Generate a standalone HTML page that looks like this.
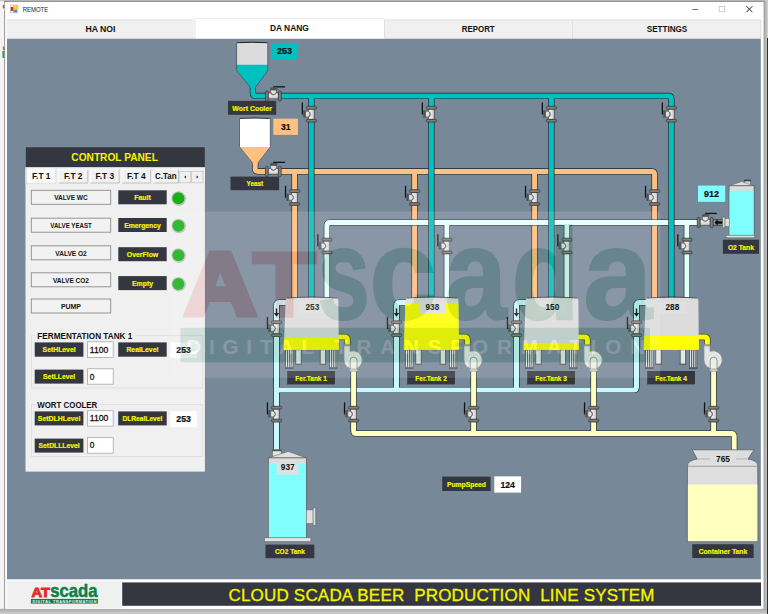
<!DOCTYPE html>
<html><head><meta charset="utf-8"><title>REMOTE</title>
<style>html,body{margin:0;padding:0;background:#f0f0f0;overflow:hidden}svg{display:block}text{font-family:"Liberation Sans",sans-serif}</style>
</head><body>
<svg width="768" height="614" viewBox="0 0 768 614">
<defs>
<linearGradient id="shr" x1="0" x2="1" y1="0" y2="0"><stop offset="0" stop-color="#9a9a9a"/><stop offset="1" stop-color="#d6d6d6"/></linearGradient>
<linearGradient id="shb" x1="0" x2="0" y1="0" y2="1"><stop offset="0" stop-color="#a8a8a8"/><stop offset="1" stop-color="#d0d0d0"/></linearGradient>
<linearGradient id="vb" x1="0" x2="1" y1="0" y2="0"><stop offset="0" stop-color="#f2f2f2"/><stop offset="0.55" stop-color="#e4e4e4"/><stop offset="1" stop-color="#bcbcbc"/></linearGradient>
<g id="vv">
 <rect x="-9.7" y="-11.7" width="1.3" height="12" fill="#141414"/>
 <rect x="-8.3" y="-4" width="2.6" height="7.4" rx="0.9" fill="#545454"/>
 <path d="M-5.9,-3 h2 a2.6,2.9 0 0 1 0,5.8 h-2z" fill="#e2e2e2" stroke="#4a4a4a" stroke-width="0.7"/>
 <path d="M-2.9,-5 h5.8 v10.2 h-5.8 v-2.4 a2.6,2.9 0 0 0 0,-5.6z" fill="url(#vb)" stroke="#4a4a4a" stroke-width="0.6"/>
 <rect x="-5" y="-7.8" width="10.1" height="2.8" rx="1" fill="#808080" stroke="#383838" stroke-width="0.8"/>
 <rect x="-5" y="5.2" width="10.1" height="2.7" rx="1" fill="#7c7c7c" stroke="#383838" stroke-width="0.8"/>
</g>
<g id="hv"><use href="#vv" transform="rotate(90)"/></g>
<g id="pump">
 <path d="M-9.6,-15 h6.2 v6.5 a9.2,9.2 0 1 1 -6.2,8.6z" fill="#e4e6e4" stroke="#7c8484" stroke-width="0.8"/>
 <rect x="-9.6" y="-15" width="6.2" height="1.6" fill="#9aa0a0"/>
</g>
<g id="tank">
 <path d="M1.8,3 Q1.8,0 5,0 H51.5 Q54.5,0 54.6,3 L55,52.1 H0 Z" fill="#dcdcdc"/>
</g>
</defs>

<rect x="0" y="0" width="768" height="614" fill="#f0f0f0"/>
<rect x="0" y="0" width="5" height="614" fill="#f4f4f4"/>
<rect x="0" y="0" width="768" height="1.2" fill="#c8c8c8"/>
<rect x="4.4" y="1" width="760" height="608" fill="#ffffff"/>
<rect x="4.2" y="1" width="0.9" height="608" fill="#8a8a8a"/>
<rect x="4.2" y="0.8" width="760" height="0.9" fill="#6a6a6a"/>
<rect x="763.6" y="1" width="4.4" height="613" fill="url(#shr)"/>
<rect x="0" y="608.8" width="768" height="5.2" fill="url(#shb)"/>
<rect x="767.1" y="38" width="0.9" height="576" fill="#1c1c1c"/>
<rect x="1.4" y="2.4" width="3" height="8.4" fill="#fafafa"/><rect x="2.8" y="4.8" width="1.6" height="3.6" fill="#d04030"/><rect x="2.8" y="46.4" width="1.6" height="3.8" fill="#d07030"/><rect x="2.4" y="51" width="2" height="7" fill="#30a060"/>
<rect x="10.5" y="5" width="7.4" height="7.8" fill="#f4f4f4" stroke="#b0b0b0" stroke-width="0.5"/>
<rect x="10.8" y="7" width="2.2" height="4" fill="#c03028"/><rect x="13.2" y="5.4" width="4.2" height="4.4" fill="#f0a020"/><rect x="14.2" y="6" width="2.4" height="2.6" fill="#ffe060"/><rect x="13.4" y="10" width="3.6" height="2.4" fill="#4090e0"/>
<text x="22.8" y="12.3" font-size="8" fill="#202020" textLength="25.4" lengthAdjust="spacingAndGlyphs">REMOTE</text>
<rect x="692.4" y="9.3" width="5.8" height="0.7" fill="#333"/>
<rect x="719.3" y="6.4" width="5.4" height="5.4" fill="none" stroke="#c4c4c4" stroke-width="0.8"/>
<path d="M746.4,6.2 l6,6 M752.4,6.2 l-6,6" stroke="#222" stroke-width="1" fill="none"/>
<rect x="6.6" y="19.6" width="754.6" height="19" fill="#f0f0f0"/>
<rect x="6.6" y="19.6" width="754.6" height="0.8" fill="#e2e2e2"/>
<rect x="193.8" y="18.6" width="190.6" height="20.2" fill="#ffffff"/>
<rect x="193.8" y="18.3" width="190.6" height="0.7" fill="#e4e4e4"/>
<rect x="194.6" y="20" width="0.8" height="18" fill="#dcdcdc"/>
<rect x="384.0" y="20" width="0.8" height="18" fill="#dcdcdc"/>
<rect x="572.2" y="20" width="0.8" height="18" fill="#dcdcdc"/>
<rect x="760.4" y="20" width="0.8" height="18" fill="#dcdcdc"/>
<rect x="6.6" y="37.8" width="188.4" height="0.8" fill="#e0e0e0"/><rect x="384.4" y="37.8" width="376.8" height="0.8" fill="#e0e0e0"/>
<text x="100.5" y="32.2" font-size="8.4" font-weight="bold" fill="#111" text-anchor="middle" textLength="30" lengthAdjust="spacingAndGlyphs">HA NOI</text>
<text x="289.4" y="31.2" font-size="8.4" font-weight="bold" fill="#111" text-anchor="middle" textLength="39" lengthAdjust="spacingAndGlyphs">DA NANG</text>
<text x="478.2" y="32.2" font-size="8.4" font-weight="bold" fill="#111" text-anchor="middle" textLength="33" lengthAdjust="spacingAndGlyphs">REPORT</text>
<text x="667" y="32.2" font-size="8.4" font-weight="bold" fill="#111" text-anchor="middle" textLength="40.5" lengthAdjust="spacingAndGlyphs">SETTINGS</text>
<rect x="7" y="38.8" width="753.8" height="540.7" fill="#778899"/>
<path d="M255.2,162 V168.4 Q255.2,171.4 258.2,171.4 H651.6 Q654.6,171.4 654.6,174.4 V299" fill="none" stroke="#1a2024" stroke-width="6.2"/>
<path d="M294.6,171.4 V299" fill="none" stroke="#1a2024" stroke-width="6.2"/>
<path d="M414.6,171.4 V299" fill="none" stroke="#1a2024" stroke-width="6.2"/>
<path d="M534.6,171.4 V299" fill="none" stroke="#1a2024" stroke-width="6.2"/>
<path d="M255.2,162 V168.4 Q255.2,171.4 258.2,171.4 H651.6 Q654.6,171.4 654.6,174.4 V299" fill="none" stroke="#ffc080" stroke-width="5.0"/>
<path d="M294.6,171.4 V299" fill="none" stroke="#ffc080" stroke-width="5.0"/>
<path d="M414.6,171.4 V299" fill="none" stroke="#ffc080" stroke-width="5.0"/>
<path d="M534.6,171.4 V299" fill="none" stroke="#ffc080" stroke-width="5.0"/>
<path d="M326.9,299 V225.5 Q326.9,222.5 329.9,222.5 H724" fill="none" stroke="#1a2024" stroke-width="6.2"/>
<path d="M446.9,222.5 V299" fill="none" stroke="#1a2024" stroke-width="6.2"/>
<path d="M566.9,222.5 V299" fill="none" stroke="#1a2024" stroke-width="6.2"/>
<path d="M686.9,222.5 V299" fill="none" stroke="#1a2024" stroke-width="6.2"/>
<path d="M326.9,299 V225.5 Q326.9,222.5 329.9,222.5 H724" fill="none" stroke="#e4ffff" stroke-width="5.0"/>
<path d="M446.9,222.5 V299" fill="none" stroke="#e4ffff" stroke-width="5.0"/>
<path d="M566.9,222.5 V299" fill="none" stroke="#e4ffff" stroke-width="5.0"/>
<path d="M686.9,222.5 V299" fill="none" stroke="#e4ffff" stroke-width="5.0"/>
<path d="M252.9,86 V92.9 Q252.9,95.9 255.9,95.9 H668.4 Q671.4,95.9 671.4,98.9 V299" fill="none" stroke="#1a2024" stroke-width="6.2"/>
<path d="M311.4,95.9 V299" fill="none" stroke="#1a2024" stroke-width="6.2"/>
<path d="M431.4,95.9 V299" fill="none" stroke="#1a2024" stroke-width="6.2"/>
<path d="M551.4,95.9 V299" fill="none" stroke="#1a2024" stroke-width="6.2"/>
<path d="M252.9,86 V92.9 Q252.9,95.9 255.9,95.9 H668.4 Q671.4,95.9 671.4,98.9 V299" fill="none" stroke="#00c0c0" stroke-width="5.0"/>
<path d="M311.4,95.9 V299" fill="none" stroke="#00c0c0" stroke-width="5.0"/>
<path d="M431.4,95.9 V299" fill="none" stroke="#00c0c0" stroke-width="5.0"/>
<path d="M551.4,95.9 V299" fill="none" stroke="#00c0c0" stroke-width="5.0"/>
<path d="M286.5,302.5 H279.5 Q276.5,302.5 276.5,305.5 V452" fill="none" stroke="#1a2024" stroke-width="6.2"/>
<path d="M406.5,302.5 H399.5 Q396.5,302.5 396.5,305.5 V390" fill="none" stroke="#1a2024" stroke-width="6.2"/>
<path d="M526.5,302.5 H519.5 Q516.5,302.5 516.5,305.5 V390" fill="none" stroke="#1a2024" stroke-width="6.2"/>
<path d="M646.5,302.5 H639.5 Q636.5,302.5 636.5,305.5 V387 Q636.5,390 633.5,390 H276.5" fill="none" stroke="#1a2024" stroke-width="6.2"/>
<path d="M286.5,302.5 H279.5 Q276.5,302.5 276.5,305.5 V452" fill="none" stroke="#c8f8fc" stroke-width="5.0"/>
<path d="M406.5,302.5 H399.5 Q396.5,302.5 396.5,305.5 V390" fill="none" stroke="#c8f8fc" stroke-width="5.0"/>
<path d="M526.5,302.5 H519.5 Q516.5,302.5 516.5,305.5 V390" fill="none" stroke="#c8f8fc" stroke-width="5.0"/>
<path d="M646.5,302.5 H639.5 Q636.5,302.5 636.5,305.5 V387 Q636.5,390 633.5,390 H276.5" fill="none" stroke="#c8f8fc" stroke-width="5.0"/>
<path d="M353.6,360 V430.5 Q353.6,433.5 356.6,433.5 H731.2 Q734.2,433.5 734.2,436.5 V451" fill="none" stroke="#1a2024" stroke-width="6.2"/>
<path d="M473.6,360 V433.5" fill="none" stroke="#1a2024" stroke-width="6.2"/>
<path d="M593.6,360 V433.5" fill="none" stroke="#1a2024" stroke-width="6.2"/>
<path d="M713.6,360 V433.5" fill="none" stroke="#1a2024" stroke-width="6.2"/>
<path d="M353.6,360 V430.5 Q353.6,433.5 356.6,433.5 H731.2 Q734.2,433.5 734.2,436.5 V451" fill="none" stroke="#ffffc0" stroke-width="5.0"/>
<path d="M473.6,360 V433.5" fill="none" stroke="#ffffc0" stroke-width="5.0"/>
<path d="M593.6,360 V433.5" fill="none" stroke="#ffffc0" stroke-width="5.0"/>
<path d="M713.6,360 V433.5" fill="none" stroke="#ffffc0" stroke-width="5.0"/>
<path d="M236.6,42.4 H267.8 V70.7 L255.6,87 H250.2 L236.6,70.7 Z" fill="#dcdcdc"/>
<path d="M236.6,64.8 H267.8 V70.7 L255.6,87.6 H250.2 L236.6,70.7 Z" fill="#00c0c0"/>
<path d="M236.6,42.4 V70.7 L250.2,87 M267.8,42.4 V70.7 L255.6,87" fill="none" stroke="#3a4448" stroke-width="0.7"/>
<path d="M237.1,42.699999999999996 Q252.2,41.9 267.3,42.699999999999996" fill="none" stroke="#222" stroke-width="1"/>
<path d="M239.5,118.1 H270.3 V146.9 L257.8,163 H252.6 L239.5,146.9 Z" fill="#ffffff"/>
<path d="M239.5,146.9 H270.3 V146.9 L257.8,163.6 H252.6 L239.5,146.9 Z" fill="#ffc080"/>
<path d="M239.5,118.1 V146.9 L252.6,163 M270.3,118.1 V146.9 L257.8,163" fill="none" stroke="#3a4448" stroke-width="0.7"/>
<path d="M240.0,118.39999999999999 Q254.9,117.6 269.8,118.39999999999999" fill="none" stroke="#222" stroke-width="1"/>
<rect x="285.6" y="349.8" width="7.4" height="18.5" fill="#e2e6e6" stroke="#3c4446" stroke-width="0.7"/>
<rect x="287.1" y="349.8" width="0.9" height="18.5" fill="#4c5456"/>
<rect x="288.90000000000003" y="349.8" width="0.9" height="18.5" fill="#4c5456"/>
<rect x="290.70000000000005" y="349.8" width="0.9" height="18.5" fill="#4c5456"/>
<rect x="285.0" y="367.3" width="8.6" height="1.3" fill="#4a5254"/>
<rect x="329.6" y="349.8" width="7.2" height="18.5" fill="#e2e6e6" stroke="#3c4446" stroke-width="0.7"/>
<rect x="331.1" y="349.8" width="0.9" height="18.5" fill="#4c5456"/>
<rect x="332.90000000000003" y="349.8" width="0.9" height="18.5" fill="#4c5456"/>
<rect x="334.70000000000005" y="349.8" width="0.9" height="18.5" fill="#4c5456"/>
<rect x="329.0" y="367.3" width="8.4" height="1.3" fill="#4a5254"/>
<rect x="295.8" y="349.8" width="5.4" height="14.6" fill="#e4e8e6" stroke="#3c4446" stroke-width="0.7"/>
<rect x="295.0" y="363.6" width="7" height="1.3" fill="#5a6264"/>
<rect x="320.2" y="349.8" width="5.4" height="14.6" fill="#e4e8e6" stroke="#3c4446" stroke-width="0.7"/>
<rect x="319.4" y="363.6" width="7" height="1.3" fill="#5a6264"/>
<path d="M337,337 H344.4 Q347.4,337 347.4,340 V346" fill="none" stroke="#4a4a20" stroke-width="6.4"/>
<path d="M337,337 H344.4 Q347.4,337 347.4,340 V346" fill="none" stroke="#ffff00" stroke-width="5.0"/>
<use href="#pump" x="353.5" y="359.8"/>
<path d="M350.2,369.5 V360.6 a3.4,3.4 0 0 1 6.8,0 V369.5" fill="#eef0e6" stroke="#7c8484" stroke-width="0.8"/>
<rect x="349.6" y="369" width="8" height="2.2" rx="0.6" fill="#d8dcd0" stroke="#7c8484" stroke-width="0.6"/>
<use href="#tank" x="283.8" y="297.7"/>
<path d="M284.2,337.8 H338.7 L338.8,349.8 H283.8 Z" fill="#ffff00"/>
<path d="M287,298 Q312,295.6 337,298" fill="none" stroke="#444" stroke-width="0.9"/>
<rect x="299.4" y="302" width="26.4" height="11.6" fill="#e0e0e0"/>
<text x="312.4" y="309.7" font-size="8.3" font-weight="bold" fill="#111" text-anchor="middle" textLength="13.8" lengthAdjust="spacingAndGlyphs">253</text>
<path d="M275.8,308.6 h1.4 v4.4 h2 l-2.7,3.8 l-2.7,-3.8 h2z" fill="#181818"/>
<rect x="287.2" y="371" width="47.8" height="13.4" fill="#34373f"/>
<text x="311.1" y="380.7" font-size="7.3" font-weight="bold" fill="#f4f400" stroke="#f4f400" stroke-width="0.22" text-anchor="middle" textLength="31.5" lengthAdjust="spacingAndGlyphs">Fer.Tank 1</text>
<rect x="405.6" y="349.8" width="7.4" height="18.5" fill="#e2e6e6" stroke="#3c4446" stroke-width="0.7"/>
<rect x="407.1" y="349.8" width="0.9" height="18.5" fill="#4c5456"/>
<rect x="408.90000000000003" y="349.8" width="0.9" height="18.5" fill="#4c5456"/>
<rect x="410.70000000000005" y="349.8" width="0.9" height="18.5" fill="#4c5456"/>
<rect x="405.0" y="367.3" width="8.6" height="1.3" fill="#4a5254"/>
<rect x="449.6" y="349.8" width="7.2" height="18.5" fill="#e2e6e6" stroke="#3c4446" stroke-width="0.7"/>
<rect x="451.1" y="349.8" width="0.9" height="18.5" fill="#4c5456"/>
<rect x="452.90000000000003" y="349.8" width="0.9" height="18.5" fill="#4c5456"/>
<rect x="454.70000000000005" y="349.8" width="0.9" height="18.5" fill="#4c5456"/>
<rect x="449.0" y="367.3" width="8.4" height="1.3" fill="#4a5254"/>
<rect x="415.8" y="349.8" width="5.4" height="14.6" fill="#e4e8e6" stroke="#3c4446" stroke-width="0.7"/>
<rect x="415.0" y="363.6" width="7" height="1.3" fill="#5a6264"/>
<rect x="440.2" y="349.8" width="5.4" height="14.6" fill="#e4e8e6" stroke="#3c4446" stroke-width="0.7"/>
<rect x="439.4" y="363.6" width="7" height="1.3" fill="#5a6264"/>
<path d="M457,337 H464.4 Q467.4,337 467.4,340 V346" fill="none" stroke="#4a4a20" stroke-width="6.4"/>
<path d="M457,337 H464.4 Q467.4,337 467.4,340 V346" fill="none" stroke="#ffff00" stroke-width="5.0"/>
<use href="#pump" x="473.5" y="359.8"/>
<path d="M470.2,369.5 V360.6 a3.4,3.4 0 0 1 6.8,0 V369.5" fill="#eef0e6" stroke="#7c8484" stroke-width="0.8"/>
<rect x="469.6" y="369" width="8" height="2.2" rx="0.6" fill="#d8dcd0" stroke="#7c8484" stroke-width="0.6"/>
<use href="#tank" x="403.8" y="297.7"/>
<path d="M405.4,303.6 H458.4 L458.8,349.8 H403.8 Z" fill="#ffff00"/>
<path d="M407,298 Q432,295.6 457,298" fill="none" stroke="#444" stroke-width="0.9"/>
<rect x="419.4" y="302" width="26.4" height="11.6" fill="#e0e0e0"/>
<text x="432.4" y="309.7" font-size="8.3" font-weight="bold" fill="#111" text-anchor="middle" textLength="13.8" lengthAdjust="spacingAndGlyphs">938</text>
<path d="M395.8,308.6 h1.4 v4.4 h2 l-2.7,3.8 l-2.7,-3.8 h2z" fill="#181818"/>
<rect x="407.2" y="371" width="47.8" height="13.4" fill="#34373f"/>
<text x="431.1" y="380.7" font-size="7.3" font-weight="bold" fill="#f4f400" stroke="#f4f400" stroke-width="0.22" text-anchor="middle" textLength="31.5" lengthAdjust="spacingAndGlyphs">Fer.Tank 2</text>
<rect x="525.6" y="349.8" width="7.4" height="18.5" fill="#e2e6e6" stroke="#3c4446" stroke-width="0.7"/>
<rect x="527.1" y="349.8" width="0.9" height="18.5" fill="#4c5456"/>
<rect x="528.9000000000001" y="349.8" width="0.9" height="18.5" fill="#4c5456"/>
<rect x="530.7" y="349.8" width="0.9" height="18.5" fill="#4c5456"/>
<rect x="525.0" y="367.3" width="8.6" height="1.3" fill="#4a5254"/>
<rect x="569.6" y="349.8" width="7.2" height="18.5" fill="#e2e6e6" stroke="#3c4446" stroke-width="0.7"/>
<rect x="571.1" y="349.8" width="0.9" height="18.5" fill="#4c5456"/>
<rect x="572.9000000000001" y="349.8" width="0.9" height="18.5" fill="#4c5456"/>
<rect x="574.7" y="349.8" width="0.9" height="18.5" fill="#4c5456"/>
<rect x="569.0" y="367.3" width="8.4" height="1.3" fill="#4a5254"/>
<rect x="535.8" y="349.8" width="5.4" height="14.6" fill="#e4e8e6" stroke="#3c4446" stroke-width="0.7"/>
<rect x="535.0" y="363.6" width="7" height="1.3" fill="#5a6264"/>
<rect x="560.2" y="349.8" width="5.4" height="14.6" fill="#e4e8e6" stroke="#3c4446" stroke-width="0.7"/>
<rect x="559.4000000000001" y="363.6" width="7" height="1.3" fill="#5a6264"/>
<path d="M577,337 H584.4 Q587.4,337 587.4,340 V346" fill="none" stroke="#4a4a20" stroke-width="6.4"/>
<path d="M577,337 H584.4 Q587.4,337 587.4,340 V346" fill="none" stroke="#ffff00" stroke-width="5.0"/>
<use href="#pump" x="593.5" y="359.8"/>
<path d="M590.2,369.5 V360.6 a3.4,3.4 0 0 1 6.8,0 V369.5" fill="#eef0e6" stroke="#7c8484" stroke-width="0.8"/>
<rect x="589.6" y="369" width="8" height="2.2" rx="0.6" fill="#d8dcd0" stroke="#7c8484" stroke-width="0.6"/>
<use href="#tank" x="523.8" y="297.7"/>
<path d="M524.0,342.9 H578.7 L578.8,349.8 H523.8 Z" fill="#ffff00"/>
<path d="M527,298 Q552,295.6 577,298" fill="none" stroke="#444" stroke-width="0.9"/>
<rect x="539.4" y="302" width="26.4" height="11.6" fill="#e0e0e0"/>
<text x="552.4" y="309.7" font-size="8.3" font-weight="bold" fill="#111" text-anchor="middle" textLength="13.8" lengthAdjust="spacingAndGlyphs">150</text>
<path d="M515.8,308.6 h1.4 v4.4 h2 l-2.7,3.8 l-2.7,-3.8 h2z" fill="#181818"/>
<rect x="527.2" y="371" width="47.8" height="13.4" fill="#34373f"/>
<text x="551.1" y="380.7" font-size="7.3" font-weight="bold" fill="#f4f400" stroke="#f4f400" stroke-width="0.22" text-anchor="middle" textLength="31.5" lengthAdjust="spacingAndGlyphs">Fer.Tank 3</text>
<rect x="645.6" y="349.8" width="7.4" height="18.5" fill="#e2e6e6" stroke="#3c4446" stroke-width="0.7"/>
<rect x="647.1" y="349.8" width="0.9" height="18.5" fill="#4c5456"/>
<rect x="648.9000000000001" y="349.8" width="0.9" height="18.5" fill="#4c5456"/>
<rect x="650.7" y="349.8" width="0.9" height="18.5" fill="#4c5456"/>
<rect x="645.0" y="367.3" width="8.6" height="1.3" fill="#4a5254"/>
<rect x="689.6" y="349.8" width="7.2" height="18.5" fill="#e2e6e6" stroke="#3c4446" stroke-width="0.7"/>
<rect x="691.1" y="349.8" width="0.9" height="18.5" fill="#4c5456"/>
<rect x="692.9000000000001" y="349.8" width="0.9" height="18.5" fill="#4c5456"/>
<rect x="694.7" y="349.8" width="0.9" height="18.5" fill="#4c5456"/>
<rect x="689.0" y="367.3" width="8.4" height="1.3" fill="#4a5254"/>
<rect x="655.8" y="349.8" width="5.4" height="14.6" fill="#e4e8e6" stroke="#3c4446" stroke-width="0.7"/>
<rect x="655.0" y="363.6" width="7" height="1.3" fill="#5a6264"/>
<rect x="680.2" y="349.8" width="5.4" height="14.6" fill="#e4e8e6" stroke="#3c4446" stroke-width="0.7"/>
<rect x="679.4000000000001" y="363.6" width="7" height="1.3" fill="#5a6264"/>
<path d="M697,337 H704.4 Q707.4,337 707.4,340 V346" fill="none" stroke="#4a4a20" stroke-width="6.4"/>
<path d="M697,337 H704.4 Q707.4,337 707.4,340 V346" fill="none" stroke="#ffff00" stroke-width="5.0"/>
<use href="#pump" x="713.5" y="359.8"/>
<path d="M710.2,369.5 V360.6 a3.4,3.4 0 0 1 6.8,0 V369.5" fill="#eef0e6" stroke="#7c8484" stroke-width="0.8"/>
<rect x="709.6" y="369" width="8" height="2.2" rx="0.6" fill="#d8dcd0" stroke="#7c8484" stroke-width="0.6"/>
<use href="#tank" x="643.8" y="297.7"/>
<path d="M644.3,336.1 H698.7 L698.8,349.8 H643.8 Z" fill="#ffff00"/>
<path d="M647,298 Q672,295.6 697,298" fill="none" stroke="#444" stroke-width="0.9"/>
<rect x="659.4" y="302" width="26.4" height="11.6" fill="#e0e0e0"/>
<text x="672.4" y="309.7" font-size="8.3" font-weight="bold" fill="#111" text-anchor="middle" textLength="13.8" lengthAdjust="spacingAndGlyphs">288</text>
<path d="M635.8,308.6 h1.4 v4.4 h2 l-2.7,3.8 l-2.7,-3.8 h2z" fill="#181818"/>
<rect x="647.2" y="371" width="47.8" height="13.4" fill="#34373f"/>
<text x="671.1" y="380.7" font-size="7.3" font-weight="bold" fill="#f4f400" stroke="#f4f400" stroke-width="0.22" text-anchor="middle" textLength="31.5" lengthAdjust="spacingAndGlyphs">Fer.Tank 4</text>
<rect x="272.4" y="449.8" width="8.8" height="8" fill="#e4e4e4" stroke="#666" stroke-width="0.6"/>
<rect x="271.8" y="449.6" width="10" height="1.6" fill="#555"/>
<path d="M268.4,457.9 L288.2,451.4 L306.3,457.9 Z" fill="#e0e0e0" stroke="#666" stroke-width="0.6"/>
<rect x="268.4" y="457.9" width="37.9" height="80" fill="#dcdcdc" stroke="#555" stroke-width="0.7"/>
<rect x="268.9" y="463.7" width="36.9" height="74" fill="#80ffff"/>
<rect x="264.5" y="537.8" width="46.4" height="3.8" fill="#e4e4e4" stroke="#666" stroke-width="0.6"/>
<rect x="306.4" y="510" width="7" height="13.4" fill="#e0e0e0" stroke="#777" stroke-width="0.5"/>
<rect x="313" y="507.8" width="2.8" height="17.8" rx="0.8" fill="#d8d8d8" stroke="#555" stroke-width="0.6"/>
<rect x="276.9" y="462.9" width="21.6" height="11.8" fill="#e0e0e0"/>
<text x="287.7" y="470.4" font-size="8.3" font-weight="bold" fill="#111" text-anchor="middle" textLength="13.8" lengthAdjust="spacingAndGlyphs">937</text>
<rect x="265.5" y="544.6" width="48.8" height="13.6" fill="#34373f"/>
<text x="289.9" y="554.1" font-size="7.4" font-weight="bold" fill="#f4f400" stroke="#f4f400" stroke-width="0.22" text-anchor="middle" textLength="30" lengthAdjust="spacingAndGlyphs">CO2 Tank</text>
<rect x="744.4" y="180" width="6.2" height="4.6" fill="#e4e4e4" stroke="#555" stroke-width="0.6"/>
<rect x="744" y="179.8" width="7" height="1.6" fill="#444"/>
<path d="M729.1,185.8 L741.6,181.6 L754,185.8 Z" fill="#e0e0e0" stroke="#666" stroke-width="0.6"/>
<rect x="729.1" y="185.8" width="24.9" height="49.5" fill="#dcdcdc" stroke="#555" stroke-width="0.7"/>
<rect x="729.6" y="190.7" width="23.9" height="44.4" fill="#80ffff"/>
<rect x="726" y="235.2" width="28.8" height="2.6" fill="#e4e4e4" stroke="#666" stroke-width="0.6"/>
<rect x="724.4" y="218.6" width="4.8" height="7.6" fill="#e0e0e0" stroke="#777" stroke-width="0.5"/>
<rect x="722.4" y="217" width="2.6" height="10.8" rx="0.8" fill="#d8d8d8" stroke="#555" stroke-width="0.6"/>
<rect x="713.4" y="220.2" width="9" height="4.6" fill="#9aa0a4" stroke="#555" stroke-width="0.5"/>
<path d="M714.2,222.5 l3.6,-2.9 v1.7 h4.4 v2.4 h-4.4 v1.7z" fill="#0c0c0c"/>
<rect x="698" y="185.6" width="27.2" height="16.2" fill="#80ffff"/>
<text x="711.6" y="196.9" font-size="8.8" font-weight="bold" fill="#111" stroke="#111" stroke-width="0.22" text-anchor="middle" textLength="15" lengthAdjust="spacingAndGlyphs">912</text>
<rect x="722.9" y="239.7" width="36.1" height="14.1" fill="#34373f"/>
<text x="740.9" y="249.5" font-size="7.6" font-weight="bold" fill="#f4f400" stroke="#f4f400" stroke-width="0.22" text-anchor="middle" textLength="26" lengthAdjust="spacingAndGlyphs">O2 Tank</text>
<path d="M692.2,449.8 H754 L748,459 Q757.8,460.5 757.8,466 V541.6 H687.4 V466 Q687.4,460.5 697.2,459 Z" fill="#dedede" stroke="#555" stroke-width="0.7"/>
<rect x="687.9" y="484.5" width="69.4" height="56.7" fill="#ffffc0"/>
<rect x="687.8" y="465.8" width="69.6" height="0.9" fill="#9a9a9a"/>
<path d="M697.6,459 H710 M736,459 H747.6" stroke="#aaa" stroke-width="0.8"/>
<text x="723" y="461.8" font-size="8.3" font-weight="bold" fill="#111" text-anchor="middle" textLength="13.8" lengthAdjust="spacingAndGlyphs">765</text>
<rect x="692.2" y="544.2" width="61.4" height="13.8" fill="#34373f"/>
<text x="722.9" y="553.8" font-size="7.4" font-weight="bold" fill="#f4f400" stroke="#f4f400" stroke-width="0.22" text-anchor="middle" textLength="48.5" lengthAdjust="spacingAndGlyphs">Container Tank</text>
<rect x="271" y="43" width="27" height="16" fill="#00c0c0"/>
<text x="284.5" y="54.2" font-size="8.8" font-weight="bold" fill="#111" stroke="#111" stroke-width="0.22" text-anchor="middle" textLength="15" lengthAdjust="spacingAndGlyphs">253</text>
<rect x="273.4" y="118.7" width="24.6" height="16.2" fill="#ffc080"/>
<text x="285.7" y="130.0" font-size="8.8" font-weight="bold" fill="#111" stroke="#111" stroke-width="0.22" text-anchor="middle" textLength="9.6" lengthAdjust="spacingAndGlyphs">31</text>
<rect x="228" y="100.8" width="48.2" height="14" fill="#34373f"/>
<text x="252.1" y="110.5" font-size="7.4" font-weight="bold" fill="#f4f400" stroke="#f4f400" stroke-width="0.22" text-anchor="middle" textLength="39.5" lengthAdjust="spacingAndGlyphs">Wort Cooler</text>
<rect x="230.5" y="176.6" width="48.6" height="13.6" fill="#34373f"/>
<text x="254.8" y="186.1" font-size="7.6" font-weight="bold" fill="#f4f400" stroke="#f4f400" stroke-width="0.22" text-anchor="middle" textLength="16.5" lengthAdjust="spacingAndGlyphs">Yeast</text>
<rect x="442.2" y="476.6" width="48.4" height="14.4" fill="#34373f"/>
<text x="466.4" y="486.5" font-size="7.6" font-weight="bold" fill="#f4f400" stroke="#f4f400" stroke-width="0.22" text-anchor="middle" textLength="39" lengthAdjust="spacingAndGlyphs">PumpSpeed</text>
<rect x="494.3" y="476.4" width="26.8" height="16.2" fill="#ffffff"/>
<text x="507.7" y="487.7" font-size="8.8" font-weight="bold" fill="#111" stroke="#111" stroke-width="0.22" text-anchor="middle" textLength="14.5" lengthAdjust="spacingAndGlyphs">124</text>
<use href="#hv" x="273.4" y="95.9"/>
<use href="#hv" x="273.4" y="171.4"/>
<use href="#hv" x="705.2" y="222.5"/>
<use href="#vv" x="311.4" y="114.2"/>
<use href="#vv" x="294.6" y="197.5"/>
<use href="#vv" x="326.9" y="246.0"/>
<use href="#vv" x="276.5" y="328.6"/>
<use href="#vv" x="353.6" y="414.1"/>
<use href="#vv" x="431.4" y="114.2"/>
<use href="#vv" x="414.6" y="197.5"/>
<use href="#vv" x="446.9" y="246.0"/>
<use href="#vv" x="396.5" y="328.6"/>
<use href="#vv" x="473.6" y="414.1"/>
<use href="#vv" x="551.4" y="114.2"/>
<use href="#vv" x="534.6" y="197.5"/>
<use href="#vv" x="566.9" y="246.0"/>
<use href="#vv" x="516.5" y="328.6"/>
<use href="#vv" x="593.6" y="414.1"/>
<use href="#vv" x="671.4" y="114.2"/>
<use href="#vv" x="654.6" y="197.5"/>
<use href="#vv" x="686.9" y="246.0"/>
<use href="#vv" x="636.5" y="328.6"/>
<use href="#vv" x="713.6" y="414.1"/>
<use href="#vv" x="276.5" y="414.1"/>
<rect x="25.5" y="147.1" width="179.4" height="324.5" fill="#f0f0f0"/>
<rect x="25.5" y="147.1" width="179.4" height="20.3" fill="#34373f"/>
<text x="114.6" y="161.3" font-size="10.6" font-weight="bold" fill="#f4f400" text-anchor="middle" textLength="86.5" lengthAdjust="spacingAndGlyphs">CONTROL PANEL</text>
<rect x="25.5" y="167.4" width="179.4" height="16" fill="#f0f0f0"/>
<rect x="26.5" y="167.8" width="29.4" height="16" fill="#fafafa" stroke="#d0d0d0" stroke-width="0.6"/>
<rect x="58.7" y="169.4" width="29.099999999999994" height="13.6" fill="#f2f2f2"/>
<path d="M58.7,183 H87.8 V169.4" fill="none" stroke="#b4b4b4" stroke-width="0.8"/>
<path d="M58.7,183 V169.4 H87.8" fill="none" stroke="#ffffff" stroke-width="0.8"/>
<rect x="90.4" y="169.4" width="28.799999999999997" height="13.6" fill="#f2f2f2"/>
<path d="M90.4,183 H119.2 V169.4" fill="none" stroke="#b4b4b4" stroke-width="0.8"/>
<path d="M90.4,183 V169.4 H119.2" fill="none" stroke="#ffffff" stroke-width="0.8"/>
<rect x="122" y="169.4" width="28.599999999999994" height="13.6" fill="#f2f2f2"/>
<path d="M122,183 H150.6 V169.4" fill="none" stroke="#b4b4b4" stroke-width="0.8"/>
<path d="M122,183 V169.4 H150.6" fill="none" stroke="#ffffff" stroke-width="0.8"/>
<rect x="153.6" y="169.4" width="24.80000000000001" height="13.6" fill="#f2f2f2"/>
<path d="M153.6,183 H178.4 V169.4" fill="none" stroke="#b4b4b4" stroke-width="0.8"/>
<path d="M153.6,183 V169.4 H178.4" fill="none" stroke="#ffffff" stroke-width="0.8"/>
<text x="41.2" y="179.2" font-size="8.8" font-weight="bold" fill="#111" text-anchor="middle" textLength="18.6" lengthAdjust="spacingAndGlyphs">F.T 1</text>
<text x="73.2" y="179.2" font-size="8.8" font-weight="bold" fill="#111" text-anchor="middle" textLength="18.6" lengthAdjust="spacingAndGlyphs">F.T 2</text>
<text x="104.8" y="179.2" font-size="8.8" font-weight="bold" fill="#111" text-anchor="middle" textLength="18.6" lengthAdjust="spacingAndGlyphs">F.T 3</text>
<text x="136.3" y="179.2" font-size="8.8" font-weight="bold" fill="#111" text-anchor="middle" textLength="18.6" lengthAdjust="spacingAndGlyphs">F.T 4</text>
<text x="165.8" y="179.2" font-size="8.8" font-weight="bold" fill="#111" text-anchor="middle" textLength="21.5" lengthAdjust="spacingAndGlyphs">C.Tan</text>
<rect x="179.2" y="171.6" width="11.4" height="11.2" fill="#f0f0f0" stroke="#c4c4c4" stroke-width="0.7"/>
<rect x="191.6" y="171.6" width="11.4" height="11.2" fill="#f0f0f0" stroke="#c4c4c4" stroke-width="0.7"/>
<path d="M186,175.6 v3 l-1.8,-1.5z M196.6,175.6 v3 l1.8,-1.5z" fill="#222"/>
<rect x="31.3" y="190.3" width="79.4" height="14" fill="#f2f2f2" stroke="#8c8c8c" stroke-width="0.9"/>
<text x="71" y="200.3" font-size="7.6" font-weight="bold" fill="#111" text-anchor="middle" textLength="33.5" lengthAdjust="spacingAndGlyphs">VALVE WC</text>
<rect x="31.3" y="218.2" width="79.4" height="14" fill="#f2f2f2" stroke="#8c8c8c" stroke-width="0.9"/>
<text x="71" y="228.2" font-size="7.6" font-weight="bold" fill="#111" text-anchor="middle" textLength="41.5" lengthAdjust="spacingAndGlyphs">VALVE YEAST</text>
<rect x="31.3" y="245.8" width="79.4" height="14" fill="#f2f2f2" stroke="#8c8c8c" stroke-width="0.9"/>
<text x="71" y="255.8" font-size="7.6" font-weight="bold" fill="#111" text-anchor="middle" textLength="31.5" lengthAdjust="spacingAndGlyphs">VALVE O2</text>
<rect x="31.3" y="272.8" width="79.4" height="14" fill="#f2f2f2" stroke="#8c8c8c" stroke-width="0.9"/>
<text x="71" y="282.8" font-size="7.6" font-weight="bold" fill="#111" text-anchor="middle" textLength="36" lengthAdjust="spacingAndGlyphs">VALVE CO2</text>
<rect x="31.3" y="299" width="79.4" height="14" fill="#f2f2f2" stroke="#8c8c8c" stroke-width="0.9"/>
<text x="71" y="309" font-size="7.6" font-weight="bold" fill="#111" text-anchor="middle" textLength="20" lengthAdjust="spacingAndGlyphs">PUMP</text>
<rect x="118.3" y="190.3" width="48.4" height="14" fill="#34373f"/>
<text x="142.5" y="200.0" font-size="7.6" font-weight="bold" fill="#f4f400" stroke="#f4f400" stroke-width="0.22" text-anchor="middle" textLength="16.5" lengthAdjust="spacingAndGlyphs">Fault</text>
<circle cx="178.9" cy="198.7" r="7" fill="#b4b4b4"/>
<circle cx="178.4" cy="198.2" r="7" fill="#c4c4c4"/>
<circle cx="178.4" cy="198.2" r="6" fill="#18b018"/>
<rect x="118.3" y="218" width="48.4" height="14" fill="#34373f"/>
<text x="142.5" y="227.7" font-size="7.6" font-weight="bold" fill="#f4f400" stroke="#f4f400" stroke-width="0.22" text-anchor="middle" textLength="36.5" lengthAdjust="spacingAndGlyphs">Emergency</text>
<circle cx="178.9" cy="226.2" r="7" fill="#b4b4b4"/>
<circle cx="178.4" cy="225.7" r="7" fill="#c4c4c4"/>
<circle cx="178.4" cy="225.7" r="6" fill="#18b018"/>
<rect x="118.3" y="247.2" width="48.4" height="14" fill="#34373f"/>
<text x="142.5" y="256.9" font-size="7.6" font-weight="bold" fill="#f4f400" stroke="#f4f400" stroke-width="0.22" text-anchor="middle" textLength="31.5" lengthAdjust="spacingAndGlyphs">OverFlow</text>
<circle cx="178.9" cy="255.8" r="7" fill="#b4b4b4"/>
<circle cx="178.4" cy="255.3" r="7" fill="#c4c4c4"/>
<circle cx="178.4" cy="255.3" r="6" fill="#18b018"/>
<rect x="118.3" y="276.1" width="48.4" height="14" fill="#34373f"/>
<text x="142.5" y="285.8" font-size="7.6" font-weight="bold" fill="#f4f400" stroke="#f4f400" stroke-width="0.22" text-anchor="middle" textLength="21" lengthAdjust="spacingAndGlyphs">Empty</text>
<circle cx="178.9" cy="284.4" r="7" fill="#b4b4b4"/>
<circle cx="178.4" cy="283.9" r="7" fill="#c4c4c4"/>
<circle cx="178.4" cy="283.9" r="6" fill="#18b018"/>
<rect x="31.4" y="335.7" width="170.9" height="52.30000000000001" fill="none" stroke="#dcdcdc" stroke-width="0.8"/>
<rect x="35.5" y="331.7" width="99" height="8" fill="#f0f0f0"/>
<text x="37.3" y="339.0" font-size="9" font-weight="bold" fill="#111" textLength="95" lengthAdjust="spacingAndGlyphs">FERMENTATION TANK 1</text>
<rect x="31.4" y="404.5" width="170.9" height="52.10000000000002" fill="none" stroke="#dcdcdc" stroke-width="0.8"/>
<rect x="35.5" y="400.5" width="64" height="8" fill="#f0f0f0"/>
<text x="37.3" y="407.8" font-size="9" font-weight="bold" fill="#111" textLength="60" lengthAdjust="spacingAndGlyphs">WORT COOLER</text>
<rect x="34.7" y="342.4" width="48.7" height="14.3" fill="#34373f"/>
<text x="59.1" y="352.3" font-size="7.6" font-weight="bold" fill="#f4f400" stroke="#f4f400" stroke-width="0.22" text-anchor="middle" textLength="33" lengthAdjust="spacingAndGlyphs">SetHLevel</text>
<rect x="87.4" y="341.8" width="25.8" height="15.6" fill="#ffffff" stroke="#a8a8a8" stroke-width="0.8"/>
<text x="89.80000000000001" y="352.6" font-size="8.8" fill="#111" stroke="#111" stroke-width="0.3" textLength="18.5" lengthAdjust="spacingAndGlyphs">1100</text>
<rect x="118.2" y="342.4" width="48.5" height="14.3" fill="#34373f"/>
<text x="142.4" y="352.3" font-size="7.6" font-weight="bold" fill="#f4f400" stroke="#f4f400" stroke-width="0.22" text-anchor="middle" textLength="32" lengthAdjust="spacingAndGlyphs">RealLevel</text>
<rect x="170.3" y="342.4" width="26.6" height="15.6" fill="#ffffff"/>
<text x="183.6" y="353.4" font-size="8.8" font-weight="bold" fill="#111" stroke="#111" stroke-width="0.22" text-anchor="middle" textLength="14.5" lengthAdjust="spacingAndGlyphs">253</text>
<rect x="34.7" y="369.6" width="48.7" height="14" fill="#34373f"/>
<text x="59.1" y="379.3" font-size="7.6" font-weight="bold" fill="#f4f400" stroke="#f4f400" stroke-width="0.22" text-anchor="middle" textLength="32" lengthAdjust="spacingAndGlyphs">SetLLevel</text>
<rect x="87.4" y="368.8" width="25.8" height="15.4" fill="#ffffff" stroke="#a8a8a8" stroke-width="0.8"/>
<text x="89.80000000000001" y="379.5" font-size="8.8" fill="#111" stroke="#111" stroke-width="0.3" textLength="4.6" lengthAdjust="spacingAndGlyphs">0</text>
<rect x="34.7" y="411.4" width="48.7" height="14" fill="#34373f"/>
<text x="59.1" y="421.1" font-size="7.6" font-weight="bold" fill="#f4f400" stroke="#f4f400" stroke-width="0.22" text-anchor="middle" textLength="42.5" lengthAdjust="spacingAndGlyphs">SetDLHLevel</text>
<rect x="87.4" y="410.7" width="25.8" height="15.4" fill="#ffffff" stroke="#a8a8a8" stroke-width="0.8"/>
<text x="89.80000000000001" y="421.4" font-size="8.8" fill="#111" stroke="#111" stroke-width="0.3" textLength="18.5" lengthAdjust="spacingAndGlyphs">1100</text>
<rect x="118.2" y="411.4" width="48.5" height="14" fill="#34373f"/>
<text x="142.4" y="421.1" font-size="7.6" font-weight="bold" fill="#f4f400" stroke="#f4f400" stroke-width="0.22" text-anchor="middle" textLength="40" lengthAdjust="spacingAndGlyphs">DLRealLevel</text>
<rect x="170.3" y="411.4" width="26.6" height="15.6" fill="#ffffff"/>
<text x="183.6" y="422.4" font-size="8.8" font-weight="bold" fill="#111" stroke="#111" stroke-width="0.22" text-anchor="middle" textLength="14.5" lengthAdjust="spacingAndGlyphs">253</text>
<rect x="34.7" y="438.6" width="48.7" height="14" fill="#34373f"/>
<text x="59.1" y="448.3" font-size="7.6" font-weight="bold" fill="#f4f400" stroke="#f4f400" stroke-width="0.22" text-anchor="middle" textLength="41" lengthAdjust="spacingAndGlyphs">SetDLLLevel</text>
<rect x="87.4" y="437.6" width="25.8" height="15.6" fill="#ffffff" stroke="#a8a8a8" stroke-width="0.8"/>
<text x="89.80000000000001" y="448.40000000000003" font-size="8.8" fill="#111" stroke="#111" stroke-width="0.3" textLength="4.6" lengthAdjust="spacingAndGlyphs">0</text>
<g opacity="0.12">
<rect x="170" y="211.6" width="490.2" height="166.2" fill="#ffffff"/>
<text font-weight="bold" fill="#e02020" stroke="#e02020"><tspan y="315.4" font-size="88.2" stroke-width="6" x="184.53" textLength="71.58" lengthAdjust="spacingAndGlyphs">A</tspan><tspan y="317.2" font-size="93.4" stroke-width="2.4" x="252.01" textLength="64.94" lengthAdjust="spacingAndGlyphs">T</tspan></text>
<text y="318.7" font-size="129.2" font-weight="bold" fill="#007440" stroke="#007440" stroke-width="2"><tspan x="317.70" textLength="52.14" lengthAdjust="spacingAndGlyphs">s</tspan><tspan x="369.28" textLength="67.27" lengthAdjust="spacingAndGlyphs">c</tspan><tspan x="444.74" textLength="61.96" lengthAdjust="spacingAndGlyphs">a</tspan><tspan x="511.44" textLength="67.88" lengthAdjust="spacingAndGlyphs">d</tspan><tspan x="583.37" textLength="68.98" lengthAdjust="spacingAndGlyphs">a</tspan></text>
<rect x="180.4" y="327.8" width="469.6" height="34.5" fill="#007440"/>
<text y="353.6" font-size="20.6" font-weight="bold" fill="#ffffff"><tspan x="186.2" textLength="127.5" lengthAdjust="spacing">DIGITAL</tspan><tspan> </tspan><tspan x="335" textLength="310" lengthAdjust="spacing">TRANSFORMATION</tspan></text>
</g>
<rect x="6.6" y="579.5" width="754.6" height="29.3" fill="#ffffff"/>
<rect x="7" y="580.6" width="114.4" height="27.8" fill="#f0f0f0"/>
<rect x="122.2" y="582.4" width="638.8" height="23.4" fill="#34373f"/>
<text x="441.5" y="601.4" font-size="17" fill="#f4f400" stroke="#f4f400" stroke-width="0.3" text-anchor="middle" textLength="426" lengthAdjust="spacing" xml:space="preserve">CLOUD SCADA BEER  PRODUCTION  LINE SYSTEM</text>
<text x="31.4" y="597.1" font-size="13.4" font-weight="bold" fill="#e8282c" stroke="#e8282c" stroke-width="0.9" textLength="18.6" lengthAdjust="spacingAndGlyphs">AT</text>
<text x="50.2" y="597.1" font-size="19" font-weight="bold" fill="#0c8048" stroke="#0c8048" stroke-width="0.5" textLength="47.4" lengthAdjust="spacingAndGlyphs">scada</text>
<rect x="30.9" y="598.9" width="67" height="4.7" fill="#0c8048"/>
<text x="32.4" y="603" font-size="3.8" font-weight="bold" fill="#f0f0f0" textLength="64" lengthAdjust="spacing">DIGITAL TRANSFORMATION</text>
</svg></body></html>
